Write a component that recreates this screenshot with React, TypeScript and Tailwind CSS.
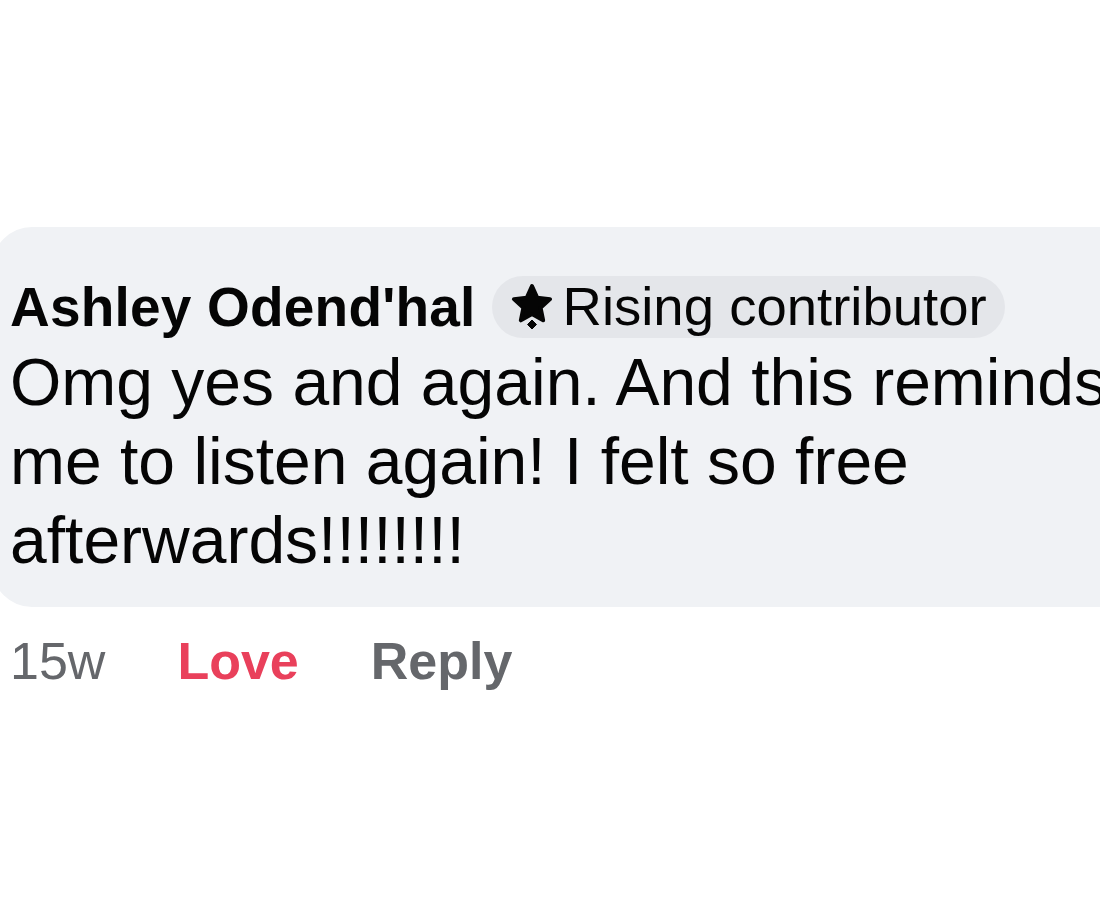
import React from 'react'

function RisingStar() {
  return (
    <svg width="44" height="48" viewBox="0 0 44 48" className="shrink-0">
      <path
        d="M22 3 L27.29 14.72 L40.07 16.13 L30.56 24.78 L33.17 37.37 L22 31 L10.83 37.37 L13.44 24.78 L3.93 16.13 L16.71 14.72 Z"
        fill="#050505"
        stroke="#050505"
        strokeWidth="4"
        strokeLinejoin="round"
      />
      <path d="M22 37 L26.5 41.5 L22 46 L17.5 41.5 Z" fill="#050505" stroke="#050505" strokeWidth="1" strokeLinejoin="round" />
    </svg>
  )
}

export default function App() {
  return (
    <div className="h-[900px] w-full overflow-hidden bg-white pt-[227px] font-['Liberation_Sans',Arial,sans-serif] text-[#050505]">
      <div className="-ml-[8px] w-[1220px] rounded-[40px] bg-[#f0f2f5] pb-[27px] pl-[18px] pr-[42px] pt-[49px]">
        <div className="flex items-center gap-[16px]">
          <span className="text-[55px] font-bold leading-[62px] tracking-[0.2px]">Ashley Odend'hal</span>
          <span className="flex h-[62px] items-center gap-[9px] rounded-full bg-[#e4e6ea] pl-[18px] pr-[18px]">
            <RisingStar />
            <span className="text-[54.5px] leading-[62px]">Rising contributor</span>
          </span>
        </div>
        <p className="mt-[5px] w-[1160px] text-[66px] leading-[79px]">
          Omg yes and again. And this reminds me to listen again! I felt so free afterwards!!!!!!!!
        </p>
      </div>
      <div className="mt-[23px] flex items-center gap-[72px] pl-[10px] text-[52px] leading-[62px]">
        <span className="text-[#65676b]">15w</span>
        <span className="font-bold text-[#e9405b]">Love</span>
        <span className="font-bold text-[#65676b]">Reply</span>
      </div>
    </div>
  )
}
